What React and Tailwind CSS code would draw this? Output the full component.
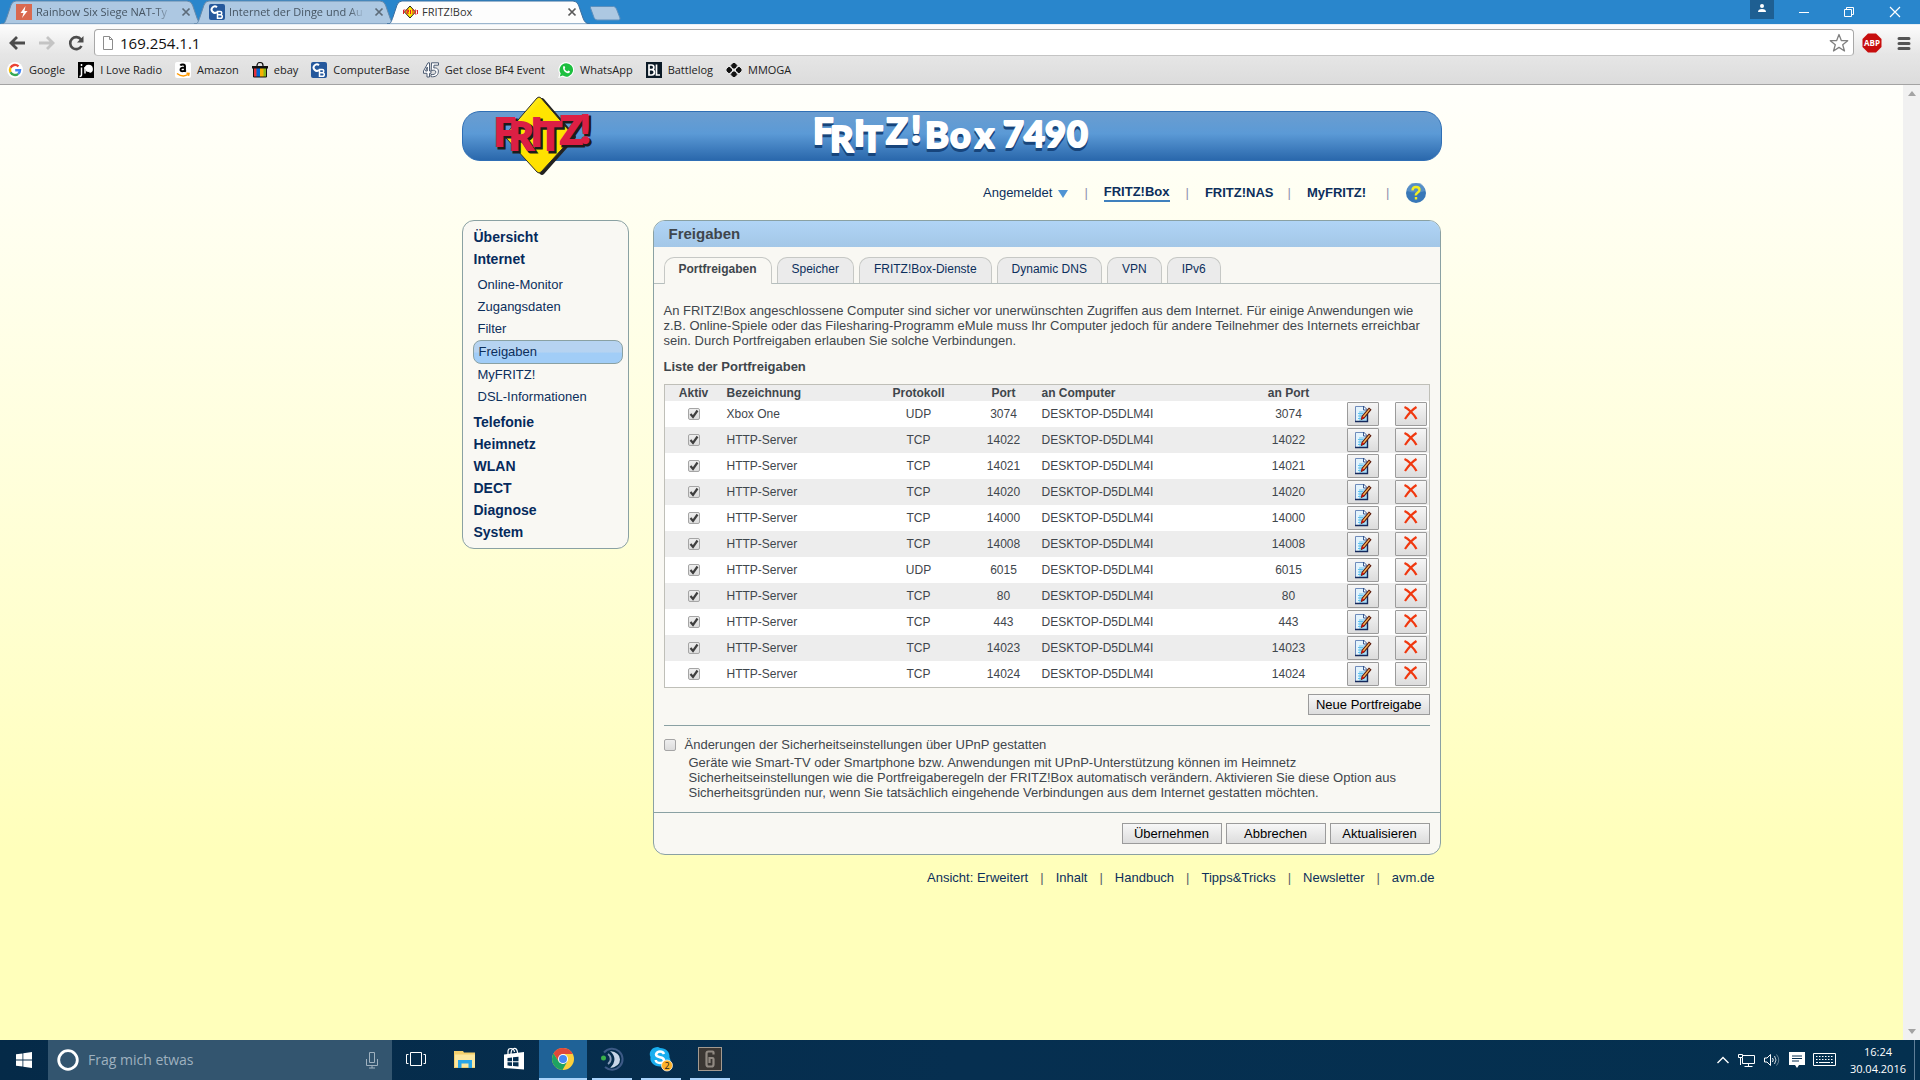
import React, { useState } from 'react';
import clsx from 'clsx';

const BROWSER_TABS = [
  { title: 'Rainbow Six Siege NAT-Ty', icon: 'bolt' },
  { title: 'Internet der Dinge und Au', icon: 'cb' },
  { title: 'FRITZ!Box', icon: 'fritz', active: true },
];

const BOOKMARKS = [
  { label: 'Google', icon: 'google' },
  { label: 'I Love Radio', icon: 'radio' },
  { label: 'Amazon', icon: 'amazon' },
  { label: 'ebay', icon: 'ebay' },
  { label: 'ComputerBase', icon: 'cb' },
  { label: 'Get close BF4 Event', icon: 'bf4' },
  { label: 'WhatsApp', icon: 'whatsapp' },
  { label: 'Battlelog', icon: 'battlelog' },
  { label: 'MMOGA', icon: 'mmoga' },
];

const MENU = [
  { label: 'Übersicht' },
  {
    label: 'Internet',
    children: ['Online-Monitor', 'Zugangsdaten', 'Filter', 'Freigaben', 'MyFRITZ!', 'DSL-Informationen'],
  },
  { label: 'Telefonie' },
  { label: 'Heimnetz' },
  { label: 'WLAN' },
  { label: 'DECT' },
  { label: 'Diagnose' },
  { label: 'System' },
];

const TABS = ['Portfreigaben', 'Speicher', 'FRITZ!Box-Dienste', 'Dynamic DNS', 'VPN', 'IPv6'];

const RULES = [
  { name: 'Xbox One', protocol: 'UDP', port: '3074' },
  { name: 'HTTP-Server', protocol: 'TCP', port: '14022' },
  { name: 'HTTP-Server', protocol: 'TCP', port: '14021' },
  { name: 'HTTP-Server', protocol: 'TCP', port: '14020' },
  { name: 'HTTP-Server', protocol: 'TCP', port: '14000' },
  { name: 'HTTP-Server', protocol: 'TCP', port: '14008' },
  { name: 'HTTP-Server', protocol: 'UDP', port: '6015' },
  { name: 'HTTP-Server', protocol: 'TCP', port: '80' },
  { name: 'HTTP-Server', protocol: 'TCP', port: '443' },
  { name: 'HTTP-Server', protocol: 'TCP', port: '14023' },
  { name: 'HTTP-Server', protocol: 'TCP', port: '14024' },
];

const FOOTER = ['Ansicht: Erweitert', 'Inhalt', 'Handbuch', 'Tipps&Tricks', 'Newsletter', 'avm.de'];

function SiteIcon({ name }) {
  return (
    <svg viewBox="0 0 16 16" className="h-4 w-4 shrink-0" aria-hidden="true">
      {name === 'bolt' && (
        <>
          <rect width="16" height="16" fill="#d9694f" />
          <path d="M9.500 2 4.500 9h3L6 14l5.500-7H8.500z" fill="#fff" />
        </>
      )}
      {name === 'cb' && (
        <>
          <rect width="16" height="16" rx="2" fill="#25589c" />
          <path d="M8 3.200A3.200 3.200 0 1 0 8 8" fill="none" stroke="#fff" strokeWidth="2" />
          <path d="M8.500 7.500h2.700a1.600 1.600 0 0 1 0 3.200H8.500zm0 3.200h3a1.800 1.800 0 0 1 0 3.600h-3z" fill="none" stroke="#fff" strokeWidth="1.500" />
        </>
      )}
      {name === 'fritz' && (
        <>
          <path d="m8 2 5.500 6L8 14 2.500 8z" fill="#ffe500" stroke="#222" />
          <path d="M1.500 10V6h2M1.500 8h1.500M5 10V6h1.500v2H5l1.500 2M8.500 6v4M11 10V6m-1 0h2M13 6h1l-1 4h1.500M15.500 6v4" fill="none" stroke="#e0202c" />
        </>
      )}
      {name === 'google' && (
        <>
          <circle cx="8" cy="8" r="8" fill="#fff" />
          <g fill="none" strokeWidth="2.400">
            <path d="M11.500 4.300A5 5 0 0 0 3.500 5.800" stroke="#ea4335" />
            <path d="M3.500 5.800a5 5 0 0 0 0 4.500" stroke="#fbbc05" />
            <path d="M3.500 10.300a5 5 0 0 0 7.700 1.500" stroke="#34a853" />
            <path d="M11.200 11.800A5 5 0 0 0 13 8.200H8.200" stroke="#4285f4" />
          </g>
        </>
      )}
      {name === 'radio' && (
        <>
          <rect width="16" height="16" fill="#000" />
          <path d="M3.500 2v2M3.500 5.500v7q0 2-2 2M7 11.500V5" fill="none" stroke="#fff" strokeWidth="1.500" />
          <path d="M6.500 7a4.200 4.200 0 1 1 5 4.100V9.500A2.500 2.500 0 0 1 9 7z" fill="#fff" />
          <circle cx="10.500" cy="7" r="3" fill="#fff" />
        </>
      )}
      {name === 'amazon' && (
        <>
          <rect width="16" height="16" rx="2" fill="#fff" />
          <path d="M5.300 3.500c1-1.500 4.700-1.500 4.700.8v4.500l1 .8M10 5.500C7 5.500 5.500 6 5.500 7.800S9 10 10 7.500" fill="none" stroke="#000" strokeWidth="1.900" />
          <path d="M2 11.500c4 3 8 3 11.500.7M11.500 11.300l2.500.2-.5 2.300" fill="none" stroke="#f90" strokeWidth="1.500" />
        </>
      )}
      {name === 'ebay' && (
        <>
          <path d="M5 5V3.500a3 3 0 0 1 6 0V5" fill="none" stroke="#111" strokeWidth="1.200" />
          <path d="M1 6h4v9H1z" fill="#e53238" />
          <path d="M4.500 6h3.500v9H4.500z" fill="#0064d2" />
          <path d="M8 6h4v9H8z" fill="#f5af02" />
          <path d="M11.500 6H15v9h-3.500z" fill="#86b817" />
          <path d="M1.500 6v9h13V6" fill="none" stroke="#111" />
          <path d="M0 4h16v2.500H0z" fill="#111" />
        </>
      )}
      {name === 'bf4' && (
        <path d="M5 .8.500 9v2.300H4V15h2.500v-3.700H8V9H6.500V.8zM4.300 5v4H2.500zM8.500.8H15.500v2.400H11L10.800 6c3-.5 5 1 4.500 4.200-.4 3.200-2.800 5-7.300 4.500v-2.200c2.700.3 4.500-.3 4.800-2.200.3-2-1.600-2.500-4.600-1.800z" fill="#fff" stroke="#4e5d73" />
      )}
      {name === 'whatsapp' && (
        <>
          <path d="M8.200 0a7.800 7.800 0 1 1-3.600 14.700L.2 16l1.300-4.200A7.800 7.800 0 0 1 8.200 0z" fill="#fff" />
          <path d="M8.200 1.200a6.700 6.700 0 1 1-3.400 12.400L1.800 14.400l.9-2.800A6.700 6.700 0 0 1 8.200 1.200z" fill="#1dbf3f" />
          <path d="M5.300 4.500c.8-.9 1.400-.2 1.900 1.200L6.600 6.900c.7 1.300 1.500 2 2.700 2.600l1-1c1.500.6 2 1 1.500 1.800-2.200 3-8-2-6.500-5.800z" fill="#fff" />
        </>
      )}
      {name === 'battlelog' && (
        <>
          <rect width="16" height="16" fill="#0b1a26" />
          <path d="M3 3h2.500a1.500 1.500 0 0 1 0 4.700H3zm0 4.700h2.700a1.500 1.500 0 0 1 0 5.300H3zM10.500 2.500V13H14" fill="none" stroke="#fff" strokeWidth="1.700" />
        </>
      )}
      {name === 'mmoga' && (
        <path
          d="M7 1.500h2l1.800 2L9 6H7L5.200 3.500zM7 10h2l1.800 2.500L9 14.500H7l-1.800-2zM1 7l2-1.800L5.500 7v2L3 10.800 1 9zM15 7l-2-1.800L10.500 7v2l2.500 1.800L15 9z"
          fill="#111"
          stroke="#111"
        />
      )}
    </svg>
  );
}

function BrowserTab({ title, icon, active }) {
  return (
    <div className={clsx('relative -ml-[11px] first:ml-0 w-[204px] h-6', active && 'z-10')}>
      <svg viewBox="0 0 204 24" preserveAspectRatio="none" className="absolute inset-0 h-full w-full" aria-hidden="true">
        <path
          d="M1 24C5 24 5 22 7 17L11 5Q12.500 1 16 1H187Q191 1 192.500 5L197 18Q199 24 204 24Z"
          fill={active ? '#fdfdfd' : '#adc8e2'}
          stroke={active ? '#3a6e9f' : '#6489ab'}
          strokeWidth="1"
        />
      </svg>
      <div className="relative flex h-6 items-center pl-4 pr-3">
        <SiteIcon name={icon} />
        <button
          type="button"
          className={clsx(
            'ml-1 h-5 flex-1 whitespace-nowrap text-left text-[11px] leading-5',
            active ? 'text-[#333]' : 'text-[#465563] mask-r-from-88%'
          )}
        >
          {title}
        </button>
        <button type="button" aria-label="Tab schließen" className="ml-2 h-4 w-3">
          <svg viewBox="0 0 12 16" className="h-4 w-3">
            <path d="m2.500 4.500 7 7m0-7-7 7" stroke={active ? '#5a5a5a' : '#5c6b79'} strokeWidth="1.700" />
          </svg>
        </button>
      </div>
    </div>
  );
}

function BrowserChrome() {
  return (
    <header className="font-['Open_Sans','Noto_Sans',sans-serif]">
      <div className="flex h-6 items-start justify-between bg-[#2986cc]">
        <div className="flex">
          {BROWSER_TABS.map((tab) => (
            <BrowserTab key={tab.title} {...tab} />
          ))}
          <button type="button" aria-label="Neuer Tab" className="h-6 w-8">
            <svg viewBox="0 0 32 24" className="h-6 w-8">
              <path d="M1.500 6.500h22q2 0 3 2.500l3.500 9q.5 2-1.500 2H7q-2 0-3-2.500L.5 8q-.5-1.500 1-1.500z" fill="#adc8e2" stroke="#5c8fbd" />
            </svg>
          </button>
        </div>
        <div className="flex items-start">
          <button type="button" aria-label="Profil" className="mr-3 flex h-[19px] w-6 justify-center bg-[#1e5f92]">
            <svg viewBox="0 0 24 19" className="h-[19px] w-6" fill="#fff">
              <circle cx="12" cy="6" r="2" />
              <path d="M8 12q0-3 4-3t4 3z" />
            </svg>
          </button>
          <button type="button" aria-label="Minimieren" className="h-6 w-[46px]">
            <svg viewBox="0 0 46 24" className="h-6 w-full" fill="none" stroke="#fff">
              <path d="M13 12.500h10" />
            </svg>
          </button>
          <button type="button" aria-label="Verkleinern" className="h-6 w-[46px]">
            <svg viewBox="0 0 46 24" className="h-6 w-full" fill="none" stroke="#fff">
              <path d="M12.500 9.500h7v7h-7zM14.500 9V7.500h7v7H20" />
            </svg>
          </button>
          <button type="button" aria-label="Schließen" className="h-6 w-[42px]">
            <svg viewBox="0 0 42 24" className="h-6 w-full" fill="none" stroke="#fff" strokeWidth="1.200">
              <path d="m12 7 10 10m0-10L12 17" />
            </svg>
          </button>
        </div>
      </div>

      <div className="border-b border-[#a3a3a3] bg-linear-to-b from-[#fdfdfd] via-[#e6e6e6] to-[#dcdcdc]">
        <div className="flex h-[34px] items-center border-t border-[#e8eef4] px-2 pt-0.5">
          <button type="button" aria-label="Zurück" className="h-5 w-5">
            <svg viewBox="0 0 20 20" className="h-5 w-5" fill="none" stroke="#4c4c4c" strokeWidth="2.800">
              <path d="M17 10H4M9 4l-6 6 6 6" />
            </svg>
          </button>
          <button type="button" aria-label="Vorwärts" className="ml-2 h-5 w-5">
            <svg viewBox="0 0 20 20" className="h-5 w-5" fill="none" stroke="#c4c4c4" strokeWidth="2.800">
              <path d="M3 10h13M11 4l6 6-6 6" />
            </svg>
          </button>
          <button type="button" aria-label="Neu laden" className="ml-2.5 h-5 w-5">
            <svg viewBox="0 0 20 20" className="h-5 w-5">
              <path d="M15 6.500A6 6 0 1 0 15.500 13" fill="none" stroke="#4c4c4c" strokeWidth="2.600" />
              <path d="M17.500 3v6.500h-6.500z" fill="#4c4c4c" />
            </svg>
          </button>
          <div className="ml-2 flex h-[27px] min-w-0 flex-1 items-center rounded-sm border border-[#a8a8a8] border-b-[#c4c4c4] bg-white pl-1.5 pr-1">
            <svg viewBox="0 0 14 16" className="h-4 w-3.5" fill="#fff" stroke="#8c8c8c">
              <path d="M2.500 1.500h6l3 3v10h-9zM8.500 1.500v3h3" />
            </svg>
            <input
              type="text"
              aria-label="Adresse"
              defaultValue="169.254.1.1"
              className="ml-[5px] min-w-0 flex-1 bg-transparent text-[15px] leading-5 text-[#111] outline-none"
            />
            <button type="button" aria-label="Lesezeichen setzen" className="h-5 w-5">
              <svg viewBox="0 0 20 20" className="h-5 w-5" fill="#fff" stroke="#808080" strokeWidth="1.300" strokeLinejoin="round">
                <path d="m10 1.500 2.300 6 6.400.2-5 4 1.800 6.300-5.500-3.600L4.500 18l1.800-6.300-5-4 6.400-.2z" />
              </svg>
            </button>
          </div>
          <button type="button" aria-label="Adblock Plus" className="ml-2 h-5 w-5">
            <svg viewBox="0 0 20 20" className="h-5 w-5">
              <path d="M6 .5h8L19.500 6v8L14 19.500H6L.5 14V6z" fill="#c70d0d" />
              <text x="10" y="13" textAnchor="middle" fontSize="8" fontWeight="700" fill="#fff">ABP</text>
            </svg>
          </button>
          <button type="button" aria-label="Menü" className="ml-3.5 h-5 w-4">
            <svg viewBox="0 0 16 20" className="h-5 w-4" stroke="#555" strokeWidth="3" strokeLinecap="round">
              <path d="M3 5.500h10M3 10.500h10M3 15.500h10" />
            </svg>
          </button>
        </div>
        <nav aria-label="Lesezeichen" className="flex h-[26px] items-center gap-[13px] pb-0.5 pl-[7px]">
          {BOOKMARKS.map((b) => (
            <a key={b.label} href="#" className="flex items-center gap-1.5 whitespace-nowrap text-[11px] leading-5 text-[#222]">
              <SiteIcon name={b.icon} />
              {b.label}
            </a>
          ))}
        </nav>
      </div>
    </header>
  );
}

function FritzLogo() {
  return (
    <svg viewBox="0 0 108 84" className="h-[84px] w-[108px] overflow-visible" role="img" aria-label="FRITZ!">
      <defs>
        <linearGradient id="diamond" x1="0" y1="0" x2="1" y2="1">
          <stop offset="0" stopColor="#fff6a0" />
          <stop offset=".3" stopColor="#ffe600" />
          <stop offset=".75" stopColor="#ffe000" />
          <stop offset="1" stopColor="#f5b80c" />
        </linearGradient>
      </defs>
      <path d="M53 5q2-2 4 0l31 36q2 2 0 4L57 80q-2 2-4 0L22 45q-2-2 0-4z" fill="#222" />
      <path d="M50 4q2-2 4 0l31 36q2 2 0 4L54 78q-2 2-4 0L19 44q-2-2 0-4z" fill="url(#diamond)" stroke="#2b2b2b" />
      <g className="font-['Liberation_Sans_Narrow','Lato',sans-serif]" fontSize="38" fontWeight="700">
        <text x="9 24 46 54 75 95" y="54 58 54 58 52 51" fill="#1c1c1c" stroke="#1c1c1c" strokeWidth="3">FRITZ!</text>
        <text x="7 22 44 52 73 93" y="52 56 52 56 50 49" fill="#dc1f44" stroke="#dc1f44" strokeWidth="2">FRITZ!</text>
      </g>
    </svg>
  );
}

function ProductTitle() {
  return (
    <h1 className="mx-auto">
      <svg viewBox="0 0 280 50" className="h-[50px] w-[280px] overflow-visible" aria-label="FRITZ!Box 7490">
        <g className="font-['Lato',sans-serif]" fontSize="36" fontWeight="900" strokeLinejoin="round">
          <text x="1 18 42 49 74 99 113 138 163 182 191 212 233 255" y="36 44 38 44 36 34 40 40 40 40 39 39 39 39" fill="#17457c" stroke="#17457c" strokeWidth="2">
            FRITZ!Box 7490
          </text>
          <text x="1 18 42 49 74 99 113 138 163 182 191 212 233 255" y="33 41 35 41 33 31 37 37 37 37 36 36 36 36" fill="#fff" stroke="#fff" strokeWidth="2">
            FRITZ!Box 7490
          </text>
        </g>
      </svg>
    </h1>
  );
}

function Separator() {
  return <span className="w-px text-[#8f90ae]" aria-hidden="true">|</span>;
}

function TopNav() {
  return (
    <nav className="flex items-center justify-end pr-4 text-[13px] leading-4 text-[#0c2f5c]">
      <button type="button" className="flex items-center gap-1.5">
        Angemeldet
        <svg viewBox="0 0 10 8" className="mt-0.5 h-2 w-2.5" aria-hidden="true">
          <path d="M0 0h10L5 8z" fill="#4f94d4" />
        </svg>
      </button>
      <span className="px-4"><Separator /></span>
      <a href="#" className="border-b-2 border-[#3f80bd] font-bold">FRITZ!Box</a>
      <span className="px-4"><Separator /></span>
      <a href="#" className="font-bold">FRITZ!NAS</a>
      <span className="pl-3.5 pr-4"><Separator /></span>
      <a href="#" className="font-bold">MyFRITZ!</a>
      <span className="pl-5 pr-4"><Separator /></span>
      <a href="#" aria-label="Hilfe">
        <svg viewBox="0 0 20 20" className="h-5 w-5">
          <circle cx="10" cy="10" r="10" fill="#3878b8" />
          <path d="M1 8a9 9 0 0 1 18 0q-9 3-18 0z" fill="#6a9fd0" opacity=".6" />
          <path d="M6.500 7.500q0-3.500 3.500-3.500t3.500 3q0 1.500-2 2.700T10 12.500M10 14v2.500" fill="none" stroke="#f4ee20" strokeWidth="2.400" />
        </svg>
      </a>
    </nav>
  );
}

function SideMenu() {
  return (
    <nav className="w-[167px] shrink-0 self-start rounded-xl border border-[#8aa1a3] bg-[#f9f8f3] px-[5px] pb-[5px] pl-2.5 pt-[5px]">
      <ul>
        {MENU.map((item) => (
          <li key={item.label}>
            <a href="#" className="block pl-px text-[14px] font-bold leading-[22px] text-[#062a5c]">
              {item.label}
            </a>
            {item.children && (
              <ul className="pb-[3px] pt-1">
                {item.children.map((child) => (
                  <li key={child}>
                    <a
                      href="#"
                      className={clsx(
                        'block pl-[5px] text-[13px] leading-[22px] text-[#0c2f5c]',
                        child === 'Freigaben' &&
                          'rounded-lg border border-[#8aa1a3] bg-linear-to-b from-[#b6d3f1] from-50% to-[#a1cdf7] to-55%'
                      )}
                    >
                      {child}
                    </a>
                  </li>
                ))}
              </ul>
            )}
          </li>
        ))}
      </ul>
    </nav>
  );
}

function Checkbox({ id, label, defaultChecked }) {
  return (
    <span className="inline-grid h-3 w-3 align-middle">
      <input
        id={id}
        type="checkbox"
        aria-label={label}
        defaultChecked={defaultChecked}
        className="peer col-start-1 row-start-1 m-0 h-3 w-3 appearance-none rounded-xs border border-[#a5a5a5] bg-linear-to-b from-[#eee] to-[#dcdcdc]"
      />
      <svg viewBox="0 0 12 12" className="pointer-events-none invisible col-start-1 row-start-1 h-3 w-3 peer-checked:visible" aria-hidden="true">
        <path d="m2.500 6 2.500 3 4.500-6.500" fill="none" stroke="#3f3f3f" strokeWidth="2.200" />
      </svg>
    </span>
  );
}

function FormButton({ children, className }) {
  return (
    <button
      type="button"
      className={clsx('h-[21px] border border-[#9b9b9b] bg-linear-to-b from-[#f7f7f7] to-[#dddddd] text-[13px] leading-[18px] text-black', className)}
    >
      {children}
    </button>
  );
}

function IconButton({ label, children }) {
  return (
    <button
      type="button"
      aria-label={label}
      className="inline-flex h-6 w-8 items-center justify-center rounded-[1px] border border-[#9b9b9b] bg-linear-to-b from-[#f6f6f6] to-[#dcdcdc] align-middle"
    >
      {children}
    </button>
  );
}

function EditIcon() {
  return (
    <svg viewBox="0 0 18 18" className="h-[18px] w-[18px]" aria-hidden="true">
      <path d="M1.500 1.500h8.500l3 3v12H1.500z" fill="#e4f4fd" />
      <path d="M5 6h8v10H5z" fill="#a9dcf7" />
      <path d="M10 1.500H1.500v15" fill="none" stroke="#6f8cbc" />
      <path d="M1 16.500h12.500V9" fill="none" stroke="#15295c" strokeWidth="1.400" />
      <path d="M9.500 1v4h4z" fill="#fff" stroke="#274a86" strokeWidth=".9" />
      <path d="M4 8.500h5M4 11h4M4 13.500h3" stroke="#5fc2ee" />
      <path d="m15 3.200 1.800 1.500-6.800 8.300-2.500 1.200.7-3z" fill="#f9b458" stroke="#5a1a0c" strokeWidth="1.100" />
      <path d="m8.300 11 2.200 1.700-3.300 1.900z" fill="#d6120c" />
    </svg>
  );
}

function DeleteIcon() {
  return (
    <svg viewBox="0 0 18 18" className="mb-0.5 h-[18px] w-[18px]" aria-hidden="true">
      <path d="M2.500 3C6 4.500 12 10 14.500 15M14.500 3C10.500 5.500 6 10.500 3 15" fill="none" stroke="#f0380f" strokeWidth="2.200" />
    </svg>
  );
}

function RulesTable() {
  return (
    <table className="mt-2.5 w-full table-fixed border-separate border-spacing-0 border border-[#bfbfb8] text-[12px] leading-4 text-[#3f464c]">
      <colgroup>
        <col className="w-[58px]" />
        <col className="w-[145px]" />
        <col className="w-[102px]" />
        <col className="w-[68px]" />
        <col />
        <col className="w-[100px]" />
        <col className="w-12" />
        <col className="w-[42px]" />
      </colgroup>
      <thead>
        <tr className="h-4 bg-[#ededed]">
          <th className="p-0">Aktiv</th>
          <th className="p-0 pl-1 text-left">Bezeichnung</th>
          <th className="p-0">Protokoll</th>
          <th className="p-0">Port</th>
          <th className="p-0 pl-1 text-left">an Computer</th>
          <th className="p-0">an Port</th>
          <td className="p-0" />
          <td className="p-0" />
        </tr>
      </thead>
      <tbody>
        {RULES.map((rule) => (
          <tr key={rule.port} className="h-[26px] bg-white text-center even:bg-[#ededed]">
            <td className="p-0 leading-none">
              <Checkbox label={`${rule.name} ${rule.port} aktiv`} defaultChecked />
            </td>
            <td className="p-0 pl-1 text-left">{rule.name}</td>
            <td className="p-0">{rule.protocol}</td>
            <td className="p-0">{rule.port}</td>
            <td className="p-0 pl-1 text-left">DESKTOP-D5DLM4I</td>
            <td className="p-0">{rule.port}</td>
            <td className="p-0 leading-none">
              <IconButton label="Bearbeiten"><EditIcon /></IconButton>
            </td>
            <td className="p-0 pr-0.5 text-right leading-none">
              <IconButton label="Löschen"><DeleteIcon /></IconButton>
            </td>
          </tr>
        ))}
      </tbody>
    </table>
  );
}

function SharingPanel() {
  const [tab, setTab] = useState('Portfreigaben');

  return (
    <main className="min-w-0 flex-1 overflow-hidden rounded-xl border border-[#8aa1a3] bg-[#f9f8f3] text-[13px] leading-[15px] text-[#3f464c]">
      <h2 className="bg-linear-to-b from-[#b0d4f6] to-[#a3c7e7] pl-[15px] text-[15px] font-bold leading-[26px]">Freigaben</h2>

      <div role="tablist" className="mt-2.5 flex items-end gap-[5px] border-b border-[#b5bebd] pl-2.5">
        {TABS.map((name) => (
          <button
            key={name}
            type="button"
            role="tab"
            aria-selected={tab === name}
            onClick={() => setTab(name)}
            className={clsx(
              'rounded-t-[10px] border border-b-0 border-[#c6c8c5] px-3.5 text-[12px]',
              tab === name
                ? '-mb-px h-[27px] bg-[#f9f8f3] pb-1 font-bold text-[#3f464c]'
                : 'h-[26px] bg-[#ebebeb] pb-[3px] text-[#0c2f5c]'
            )}
          >
            {name}
          </button>
        ))}
      </div>

      <div className="px-2.5 pt-[19px]">
        <p>
          An FRITZ!Box angeschlossene Computer sind sicher vor unerwünschten Zugriffen aus dem Internet. Für einige Anwendungen wie
          z.B. Online-Spiele oder das Filesharing-Programm eMule muss Ihr Computer jedoch für andere Teilnehmer des Internets erreichbar
          sein. Durch Portfreigaben erlauben Sie solche Verbindungen.
        </p>
        <h3 className="mt-[11px] font-bold">Liste der Portfreigaben</h3>
        <RulesTable />
        <div className="flex justify-end pt-1.5">
          <FormButton className="px-[7px]">Neue Portfreigabe</FormButton>
        </div>
        <div className="mt-2.5 border-t border-[#8aa1a3] pt-[11px]">
          <div className="flex items-center gap-[9px]">
            <Checkbox id="upnp" />
            <label htmlFor="upnp">Änderungen der Sicherheitseinstellungen über UPnP gestatten</label>
          </div>
          <p className="mt-[3px] px-[25px]">
            Geräte wie Smart-TV oder Smartphone bzw. Anwendungen mit UPnP-Unterstützung können im Heimnetz
            Sicherheitseinstellungen wie die Portfreigaberegeln der FRITZ!Box automatisch verändern. Aktivieren Sie diese Option aus
            Sicherheitsgründen nur, wenn Sie tatsächlich eingehende Verbindungen aus dem Internet gestatten möchten.
          </p>
        </div>
      </div>

      <div className="mt-3 flex justify-end gap-1 border-t border-[#8aa1a3] px-2.5 py-2.5">
        <FormButton className="w-[100px]">Übernehmen</FormButton>
        <FormButton className="w-[100px]">Abbrechen</FormButton>
        <FormButton className="w-[100px]">Aktualisieren</FormButton>
      </div>
    </main>
  );
}

function FritzPage() {
  return (
    <div className="flex min-h-0 flex-1 bg-[#ffffbb]">
      <div className="min-w-0 flex-1 bg-linear-to-b from-[#fffffb] to-[#ffffbb] to-80% font-['Liberation_Sans',Arial,sans-serif]">
        <div className="mx-auto w-full max-w-[980px] pt-[26px]">
          <div className="relative flex h-[50px] items-center rounded-[18px] border border-[#2f6fb5] bg-linear-to-b from-[#6a9dd0] via-[#5b9ad6] via-45% to-[#2a68ac]">
            <div className="absolute left-6 -top-[18px]">
              <FritzLogo />
            </div>
            <ProductTitle />
          </div>
          <div className="pt-[22px]">
            <TopNav />
          </div>
          <div className="flex gap-6 pr-px pt-[17px]">
            <SideMenu />
            <SharingPanel />
          </div>
          <footer className="flex justify-end pr-[7px] pt-[15px] text-[13px] leading-[15px] text-[#0c2f5c]">
            {FOOTER.map((name, i) => (
              <React.Fragment key={name}>
                {i > 0 && <span className="px-3 text-[#55606a]">|</span>}
                <a href="#">{name}</a>
              </React.Fragment>
            ))}
          </footer>
        </div>
      </div>
      <div className="flex w-[17px] shrink-0 flex-col items-center justify-between bg-[#f1f1f1] py-1.5" aria-hidden="true">
        <svg viewBox="0 0 8 5" className="h-[5px] w-2"><path d="M0 5h8L4 0z" fill="#a3a3a3" /></svg>
        <svg viewBox="0 0 8 5" className="h-[5px] w-2"><path d="M0 0h8L4 5z" fill="#a3a3a3" /></svg>
      </div>
    </div>
  );
}

function TaskButton({ label, running, active, children }) {
  return (
    <button
      type="button"
      aria-label={label}
      className={clsx('flex h-10 w-12 flex-col items-center', active && 'bg-[#1f6297]')}
    >
      <span className="flex flex-1 items-center">{children}</span>
      <span className={clsx('h-0.5', active ? 'w-12' : 'w-10', running ? 'bg-[#a9d3fb]' : 'bg-transparent')} />
    </button>
  );
}

function Taskbar() {
  return (
    <footer className="flex h-10 items-stretch bg-linear-to-r from-[#052a48] via-[#062f50] to-[#04304f] font-['Open_Sans','Noto_Sans',sans-serif] text-white">
      <button type="button" aria-label="Start" className="flex w-12 items-center justify-center">
        <svg viewBox="0 0 16 16" className="h-4 w-4" fill="#fff">
          <path d="M0 2.300 6.500 1.400v6.200H0zM7.300 1.300 16 0v7.600H7.300zM0 8.400h6.500v6.200L0 13.700zM7.300 8.400H16V16l-8.700-1.300z" />
        </svg>
      </button>
      <div className="flex w-[344px] items-center bg-[#33556f] pl-[9px] pr-3">
        <svg viewBox="0 0 22 22" className="h-[22px] w-[22px]" aria-hidden="true">
          <circle cx="11" cy="11" r="9.300" fill="none" stroke="#fff" strokeWidth="2.800" />
        </svg>
        <input
          type="text"
          aria-label="Suche"
          placeholder="Frag mich etwas"
          className="ml-[9px] min-w-0 flex-1 bg-transparent text-[14px] leading-5 outline-none placeholder:text-[#9fb1bf]"
        />
        <svg viewBox="0 0 16 18" className="h-[18px] w-4" fill="none" stroke="#9fb1bf" aria-hidden="true">
          <path d="M5.500 1.500h5v10h-5zM2.500 8v6.500h11V8M8 14.500V17M5 17h6" />
        </svg>
      </div>
      <div className="flex gap-px">
        <TaskButton label="Taskansicht">
          <svg viewBox="0 0 22 16" className="h-4 w-[22px]" fill="none" stroke="#fff">
            <path d="M5.500 1.500h11v13h-11zM3.500 3.500h-2v9h2M18.500 3.500h2v9h-2" />
          </svg>
        </TaskButton>
        <TaskButton label="Explorer">
          <svg viewBox="0 0 22 20" className="h-5 w-[22px]">
            <path d="M0 2h9l1 1.500h11V19H0z" fill="#f4cf6d" />
            <path d="M1 5.500h20V18H1z" fill="#fce7a0" />
            <path d="M4 19v-8h14v8h-3.500v-4.500h-7V19z" fill="#2aa5e8" />
          </svg>
        </TaskButton>
        <TaskButton label="Store">
          <svg viewBox="0 0 22 24" className="h-6 w-[22px]">
            <path d="M5 8V4.500q0-3 3-3t3.500 3.500M8 7q0-5 3-5.500t3.500 4V6" fill="none" stroke="#fff" strokeWidth="1.200" />
            <path d="M1 7.500 21 5v17.500L1 21z" fill="#fff" />
            <path d="m4.500 11 4.500-.5v3.800H4.500zM10 10.300l5.500-.6v4.600H10zM4.500 15.200H9V19l-4.500-.4zM10 15.200h5.500v4.400L10 19z" fill="#062f50" />
          </svg>
        </TaskButton>
        <TaskButton label="Chrome" running active>
          <svg viewBox="0 0 22 22" className="h-[22px] w-[22px]">
            <circle cx="11" cy="11" r="11" fill="#fbcf3c" />
            <path d="M11 6h9.800A11 11 0 0 0 1.500 5.500L6.700 13.500z" fill="#e0483a" />
            <path d="M1.500 5.500A11 11 0 0 0 10.500 22l4.800-8.500L11 16 6.700 13.500z" fill="#1ea362" />
            <circle cx="11" cy="11" r="5" fill="#fff" />
            <circle cx="11" cy="11" r="4" fill="#4587f4" />
          </svg>
        </TaskButton>
        <TaskButton label="TeamSpeak" running>
          <svg viewBox="0 0 24 24" className="h-6 w-6">
            <path d="M4 5.500A10.500 10.500 0 1 1 5 20" fill="none" stroke="#3d5a86" strokeWidth="2" />
            <path d="M10 4q9 8 0 17 10-1.500 10-8.500T10 4z" fill="#c8d6e8" />
            <path d="M8 7a6 6 0 0 1 0 10" fill="none" stroke="#8ea1bc" strokeWidth="1.800" />
            <circle cx="3.500" cy="11" r="2.500" fill="#39b04a" />
          </svg>
        </TaskButton>
        <TaskButton label="Skype" running>
          <svg viewBox="0 0 26 26" className="h-[26px] w-[26px]">
            <path d="M7 1.500q3-1 5 .5c6 0 10 4 9.500 9.500 2 3 1 8-3 9.500q-3 1-5-.5C6 21 1.500 16 2.500 11 .5 7 3 2.500 7 1.500z" fill="#19aeef" />
            <path d="M16 8q-1-2.500-4-2.500T8 8.300q0 2.200 4 2.900t4 3.200q0 2.600-4 2.600t-4.300-3" fill="none" stroke="#fff" strokeWidth="2.500" />
            <circle cx="19" cy="19.500" r="5.500" fill="#fdb12a" stroke="#fff" strokeWidth=".7" />
            <text x="19" y="23" textAnchor="middle" fontSize="9" fill="#222">2</text>
          </svg>
        </TaskButton>
        <TaskButton label="Rainbow Six Siege" running>
          <svg viewBox="0 0 24 24" className="h-6 w-6">
            <rect x=".5" y=".5" width="23" height="23" fill="#3b3733" stroke="#a39a90" />
            <path d="M15.500 7.500V5.500q0-1-1-1h-4q-2 0-2 2v11q0 2 2 2h3q2 0 2-2V12q0-1-1-1h-3v5" fill="none" stroke="#918a82" strokeWidth="2.200" />
          </svg>
        </TaskButton>
      </div>

      <div className="ml-auto flex items-center gap-2">
        <svg viewBox="0 0 14 10" className="h-2.5 w-3.5" fill="none" stroke="#fff" strokeWidth="1.400">
          <path d="m1.500 8 5.500-5.500L12.500 8" />
        </svg>
        <svg viewBox="0 0 17 16" className="h-4 w-[17px]" fill="none" stroke="#fff">
          <path d="M5 3.500h11.500v8H4.500V6M10.500 11.500v3M6.500 14.500h8M.5 2.500h4v3h-4zM2.500 6v7" />
        </svg>
        <svg viewBox="0 0 18 16" className="h-4 w-[18px]" fill="none" stroke="#fff">
          <path d="M1.500 6h2.500l3.500-3.500v11L4 10H1.500zM9.500 6q1.500 2 0 4" />
          <path d="M11.500 4q3 4 0 8" opacity=".8" />
          <path d="M13.500 2.500q4.500 5.500 0 11" opacity=".4" />
        </svg>
        <svg viewBox="0 0 16 16" className="h-4 w-4">
          <path d="M0 0h16v13h-6l-2 3-2-3H0z" fill="#fff" />
          <path d="M3 4h10M3 6.500h10M3 9h7" stroke="#062f50" />
        </svg>
        <svg viewBox="0 0 23 14" className="h-3.5 w-[23px]" fill="none" stroke="#fff">
          <path d="M.5 .5h22v12H.5z" />
          <path d="M3 3.500h17M3 6.500h17" strokeDasharray="1.500 1.500" />
          <path d="M3 9.500h2m1 0h11m1 0h2" />
        </svg>
        <div className="ml-1.5 text-center text-[11px] leading-[17px]">
          <p>16:24</p>
          <p>30.04.2016</p>
        </div>
        <div className="h-10 w-1.5 border-l border-[#5f7f98]" />
      </div>
    </footer>
  );
}

export default function App() {
  return (
    <div className="flex min-h-screen flex-col">
      <BrowserChrome />
      <FritzPage />
      <Taskbar />
    </div>
  );
}
